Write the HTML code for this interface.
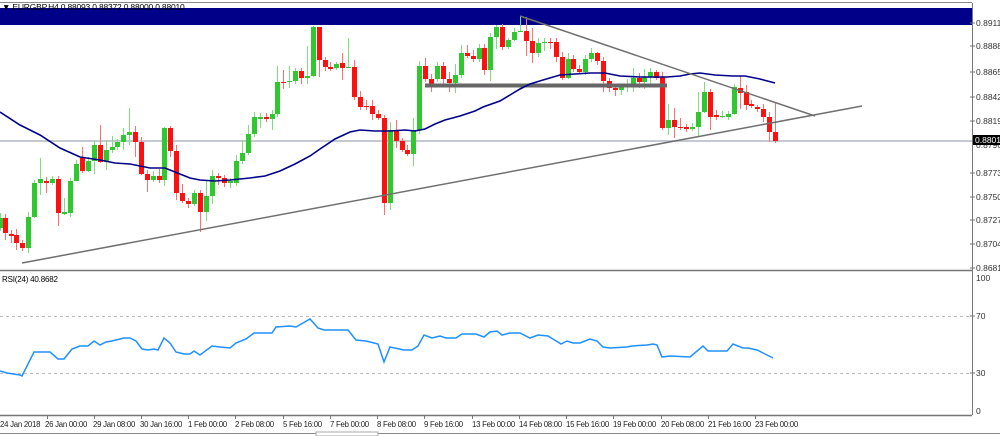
<!DOCTYPE html>
<html><head><meta charset="utf-8"><style>
html,body{margin:0;padding:0;background:#fff;width:1000px;height:436px;overflow:hidden}
svg{display:block;font-family:"Liberation Sans",sans-serif}
</style></head><body>
<svg width="1000" height="436" viewBox="0 0 1000 436" xmlns="http://www.w3.org/2000/svg">
<rect width="1000" height="436" fill="#fff"/>
<line x1="0" y1="2.5" x2="972" y2="2.5" stroke="#888"/>
<rect x="0" y="8" width="972" height="17" fill="#000088"/>
<text x="2" y="10" font-size="8.5" letter-spacing="-0.2" fill="#000">▼ EURGBP,H4  0.88093 0.88372 0.88000 0.88010</text>
<line x1="0" y1="141" x2="972" y2="141" stroke="#c4c8d0" stroke-width="2"/>
<g fill="none" stroke-width="1">
<path stroke="#7fdc7f" d="M0.5 213V231M28.5 212V253M34.5 180V218M40.5 158V195M52.5 176V185M64.5 198V215M70.5 178V217M76.5 160V181M88.5 157V172M94.5 141V174M106.5 140V170M112.5 136V153M117.5 139V150M123.5 128V150M129.5 108V145M153.5 171V182M164.5 127V186M194.5 190V206M206.5 180V221M212.5 170V204M230.5 178V188M236.5 155V186M242.5 140V164M248.5 125V155M254.5 112V137M260.5 113V128M272.5 110V130M277.5 66V117M289.5 66V88M295.5 68V84M307.5 46V84M313.5 26V77M336.5 62V70M348.5 38V68M390.5 122V210M413.5 118V166M419.5 61V134M437.5 62V82M455.5 64V93M461.5 45V78M479.5 44V62M490.5 33V81M496.5 25V49M508.5 38V49M514.5 28V41M520.5 16V32M538.5 38V57M544.5 38V51M568.5 53V79M585.5 55V75M591.5 48V62M621.5 84V95M627.5 79V92M633.5 68V92M644.5 69V89M650.5 68V86M668.5 104V135M692.5 123V131M698.5 92V137M704.5 82V113M722.5 111V118M728.5 111V120M734.5 84V115"/>
<path stroke="#ff7070" d="M5.5 214V240M11.5 230V243M16.5 229V250M22.5 240V251M46.5 177V193M58.5 176V226M82.5 147V173M100.5 125V163M135.5 126V157M141.5 137V175M147.5 170V192M159.5 169V183M170.5 126V157M176.5 145V200M182.5 184V203M188.5 198V208M200.5 190V232M218.5 173V185M224.5 175V187M266.5 113V122M283.5 70V89M301.5 68V84M319.5 27V77M325.5 57V71M330.5 62V71M342.5 53V80M354.5 60V100M360.5 91V110M366.5 100V110M372.5 100V120M378.5 110V120M384.5 115V215M396.5 120V148M402.5 138V152M407.5 145V156M425.5 58V82M431.5 74V92M443.5 62V85M449.5 72V92M467.5 45V58M473.5 50V62M484.5 44V75M502.5 24V50M526.5 17V56M532.5 28V63M550.5 38V49M556.5 38V62M562.5 52V80M573.5 55V72M579.5 65V73M597.5 52V65M603.5 57V92M609.5 78V92M615.5 84V96M639.5 73V88M656.5 70V80M662.5 72V130M674.5 108V138M680.5 118V130M686.5 124V132M710.5 89V130M716.5 110V120M740.5 76V109M746.5 85V110M751.5 100V108M757.5 105V112M763.5 104V122M769.5 112V142M775.5 102V143"/>
</g>
<path fill="#2fc82f" d="M-2 218h5v10h-5zM26 217h5v31h-5zM32 183h5v34h-5zM38 179h5v4h-5zM50 179h5v4h-5zM62 212h5v2h-5zM68 181h5v32h-5zM74 164h5v17h-5zM86 161h5v10h-5zM92 145h5v16h-5zM104 150h5v12h-5zM110 147h5v3h-5zM115 142h5v5h-5zM121 135h5v7h-5zM127 132h5v3h-5zM151 176h5v4h-5zM162 128h5v52h-5zM192 193h5v11h-5zM204 196h5v16h-5zM210 176h5v20h-5zM228 181h5v2h-5zM234 161h5v22h-5zM240 153h5v8h-5zM246 134h5v19h-5zM252 117h5v17h-5zM258 117h5v2h-5zM270 114h5v5h-5zM275 82h5v32h-5zM287 81h5v1h-5zM293 71h5v10h-5zM305 76h5v2h-5zM311 27h5v49h-5zM334 64h5v4h-5zM346 67h5v1h-5zM388 130h5v73h-5zM411 130h5v24h-5zM417 66h5v64h-5zM435 66h5v13h-5zM453 75h5v8h-5zM459 53h5v22h-5zM477 48h5v11h-5zM488 37h5v33h-5zM494 27h5v10h-5zM506 40h5v7h-5zM512 32h5v8h-5zM518 31h5v1h-5zM536 43h5v10h-5zM542 42h5v1h-5zM566 59h5v19h-5zM583 59h5v13h-5zM589 53h5v6h-5zM619 87h5v3h-5zM625 85h5v2h-5zM631 78h5v7h-5zM642 77h5v5h-5zM648 72h5v5h-5zM666 120h5v8h-5zM690 127h5v2h-5zM696 112h5v15h-5zM702 92h5v20h-5zM720 116h5v1h-5zM726 114h5v3h-5zM732 87h5v27h-5z"/>
<path fill="#ff1010" d="M3 218h5v15h-5zM9 234h5v2h-5zM14 235h5v8h-5zM20 243h5v5h-5zM44 181h5v2h-5zM56 179h5v34h-5zM80 158h5v13h-5zM98 145h5v17h-5zM133 132h5v10h-5zM139 142h5v32h-5zM145 174h5v6h-5zM157 176h5v4h-5zM168 128h5v23h-5zM174 151h5v42h-5zM180 193h5v8h-5zM186 201h5v3h-5zM198 193h5v19h-5zM216 176h5v2h-5zM222 178h5v5h-5zM264 117h5v2h-5zM281 82h5v1h-5zM299 71h5v7h-5zM317 27h5v33h-5zM323 60h5v7h-5zM328 67h5v2h-5zM340 63h5v5h-5zM352 67h5v30h-5zM358 97h5v10h-5zM364 106h5v1h-5zM370 106h5v8h-5zM376 114h5v4h-5zM382 118h5v85h-5zM394 130h5v11h-5zM400 141h5v9h-5zM405 150h5v4h-5zM423 66h5v13h-5zM429 79h5v6h-5zM441 66h5v13h-5zM447 79h5v4h-5zM465 53h5v3h-5zM471 56h5v3h-5zM482 48h5v22h-5zM500 27h5v20h-5zM524 31h5v10h-5zM530 41h5v12h-5zM548 42h5v1h-5zM554 42h5v15h-5zM560 57h5v21h-5zM571 59h5v10h-5zM577 69h5v3h-5zM595 53h5v8h-5zM601 61h5v20h-5zM607 81h5v7h-5zM613 88h5v2h-5zM637 78h5v4h-5zM654 72h5v6h-5zM660 77h5v51h-5zM672 120h5v7h-5zM678 127h5v1h-5zM684 127h5v2h-5zM708 92h5v25h-5zM714 115h5v2h-5zM738 88h5v5h-5zM744 92h5v13h-5zM749 104h5v2h-5zM755 107h5v2h-5zM761 109h5v8h-5zM767 117h5v15h-5zM773 132h5v9h-5z"/>
<rect x="425" y="83.5" width="242" height="4" fill="#666"/>
<polyline fill="none" stroke="#000088" stroke-width="1.6" points="0,112 20,125 40,135 60,148 80,157 100,160 115,163 130,164 150,168 165,168 175,172 190,178 200,180 215,181 230,180 250,178 265,176 280,171 295,164 310,156 320,149 335,139 350,132 360,130 375,131 390,131 405,130 415,131 425,129 435,124 445,120 460,116 475,111 483,107 500,101 510,95 520,89 530,84 543,80 560,75 575,74 590,73 605,73 620,76 640,77 667,77 680,76 690,74 700,73 715,75 733,76 745,76 760,79 775,83"/>
<line x1="22" y1="263" x2="862" y2="106" stroke="#707070" stroke-width="1.5"/>
<line x1="520" y1="16" x2="815" y2="116" stroke="#707070" stroke-width="1.5"/>
<line x1="972.5" y1="3" x2="972.5" y2="415" stroke="#777"/>
<line x1="0" y1="270.5" x2="972" y2="270.5" stroke="#777" stroke-width="1.5"/>
<line x1="0" y1="415.5" x2="972" y2="415.5" stroke="#777" stroke-width="1.5"/>
<g font-size="8.5" fill="#333">
<text x="976" y="26">0.89110</text><text x="976" y="49">0.88880</text><text x="976" y="75">0.88650</text><text x="976" y="100">0.88425</text><text x="976" y="124">0.88195</text><text x="976" y="148">0.87965</text><text x="976" y="176">0.87735</text><text x="976" y="200">0.87505</text><text x="976" y="223">0.87275</text><text x="976" y="247">0.87045</text><text x="976" y="271">0.86815</text>
<text x="976" y="281">100</text><text x="976" y="319">70</text><text x="976" y="376">30</text><text x="976" y="414">0</text>
</g>
<g stroke="#777"><path d="M970 23H975M970 46H975M970 72H975M970 97H975M970 121H975M970 173H975M970 197H975M970 220H975M970 244H975M970 268H975M970 316H975M970 373H975"/></g>
<rect x="973" y="135" width="27" height="10" fill="#000"/>
<text x="975" y="143" font-size="8.5" fill="#fff">0.88010</text>
<text x="2" y="282" font-size="8" letter-spacing="-0.2" fill="#000">RSI(24) 40.8682</text>
<line x1="0" y1="316.5" x2="970" y2="316.5" stroke="#bbb" stroke-dasharray="3,3"/>
<line x1="0" y1="373.5" x2="970" y2="373.5" stroke="#bbb" stroke-dasharray="3,3"/>
<polyline fill="none" stroke="#1e90ff" stroke-width="1.5" points="0,371 7,373 20,375 22,376 34,352 50,352 58,359 64,359 72,349 80,346 88,346 94,341 100,345 106,342 112,341 124,338 130,338 136,341 142,349 148,350 154,349 158,350 164,338 170,343 176,352 184,354 190,354 194,351 200,355 212,346 220,347 230,348 236,343 246,339 254,333 262,333 272,333 276,327 290,326 296,327 310,319 318,328 324,330 348,330 356,340 366,341 378,344 384,362 390,347 404,350 412,350 418,346 424,335 432,338 440,336 446,338 456,338 462,334 476,334 484,337 490,332 497,331 502,335 510,333 520,333 530,338 538,335 548,336 561,344 567,341 573,343 580,343 590,339 597,341 603,347 610,348 627,347 632,346 647,345 653,344 657,345 662,357 670,356 690,357 703,346 708,351 727,351 733,344 743,348 748,348 757,350 763,353 773,358"/>
<g stroke="#777"><path d="M47.5 416v3M94.5 416v3M141.5 416v3M188.5 416v3M235.5 416v3M283.5 416v3M330.5 416v3M377.5 416v3M424.5 416v3M472.5 416v3M519.5 416v3M566.5 416v3M613.5 416v3M661.5 416v3M708.5 416v3M755.5 416v3"/></g>
<g font-size="7.8" letter-spacing="-0.25" fill="#222">
<text x="0" y="427">24 Jan 2018</text><text x="45" y="427">26 Jan 00:00</text><text x="93" y="427">29 Jan 08:00</text><text x="140" y="427">30 Jan 16:00</text><text x="188" y="427">1 Feb 00:00</text><text x="235" y="427">2 Feb 08:00</text><text x="283" y="427">5 Feb 16:00</text><text x="330" y="427">7 Feb 00:00</text><text x="377" y="427">8 Feb 08:00</text><text x="424" y="427">9 Feb 16:00</text><text x="472" y="427">13 Feb 00:00</text><text x="519" y="427">14 Feb 08:00</text><text x="566" y="427">15 Feb 16:00</text><text x="613" y="427">19 Feb 00:00</text><text x="661" y="427">20 Feb 08:00</text><text x="708" y="427">21 Feb 16:00</text><text x="755" y="427">23 Feb 00:00</text>
</g>
<line x1="0" y1="433.5" x2="1000" y2="433.5" stroke="#888"/>
<rect x="316" y="432" width="62" height="4" fill="#fff" stroke="#aaa"/>
</svg>
</body></html>
